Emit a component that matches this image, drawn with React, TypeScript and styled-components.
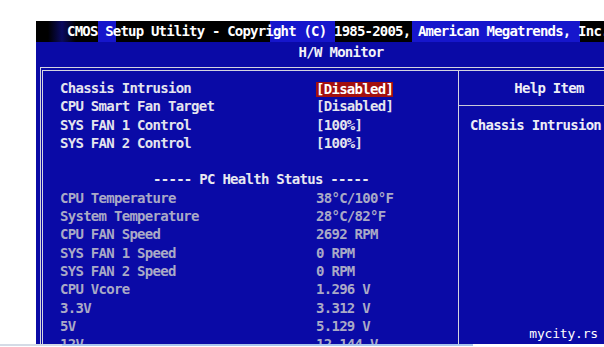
import React from "react";
import styled, { createGlobalStyle } from "styled-components";

const GlobalStyle = createGlobalStyle`
    html, body {
        margin: 0;
        padding: 0;
        background: #ffffff;
        overflow: hidden;
    }
`;

const Page = styled.div`
    position: relative;
    width: 604px;
    height: 347px;
    padding: 21px 0 0 36px;
    box-sizing: border-box;
    overflow: hidden;
`;

const Screen = styled.div`
    width: 610px;
    height: 323px;
    background: #0a0aa6;
    overflow: hidden;
    display: flex;
    flex-direction: column;
    font-family: "DejaVu Sans Mono", "Liberation Mono", monospace;
    font-weight: bold;
    font-size: 14px;
    letter-spacing: -0.72px;
    color: #e4e4ee;
`;

const TitleBar = styled.div`
    flex-shrink: 0;
    height: 21px;
    line-height: 21px;
    padding-left: 31px;
    white-space: nowrap;
    color: #ffffff;
    letter-spacing: -0.8px;
    background: linear-gradient(
        to right,
        #000 0,
        #000 12px,
        #0a0a60 26px,
        #000 40px,
        #000 62px,
        #1616cc 62px,
        #1616cc 80px,
        #000 80px,
        #000 234px,
        #1616cc 234px,
        #1616cc 299px,
        #000 299px,
        #000 376px,
        #1616cc 376px,
        #1616cc 544px,
        #000 544px
    );
`;

const SubTitle = styled.div`
    flex-shrink: 0;
    height: 25px;
    line-height: 21px;
    text-align: center;
    color: #f2f2f8;
`;

const Frame = styled.div`
    flex: 1;
    min-height: 0;
    display: flex;
    margin: 0 4px;
    border-top: 4px double #d4d4e0;
    border-left: 3px double #d4d4e0;
    border-right: 3px double #d4d4e0;
`;

const MainPanel = styled.div`
    width: 415px;
    padding: 8px 0 0 17px;
    box-sizing: border-box;
`;

const Row = styled.div<{ $dim?: boolean }>`
    display: grid;
    grid-template-columns: 256px auto;
    height: 18.3px;
    line-height: 18.3px;
    white-space: nowrap;
    color: ${(p) => (p.$dim ? "#a9a9c6" : "#e4e4ee")};
`;

const SectionHead = styled.div`
    height: 18.3px;
    line-height: 18.3px;
    padding-left: 93px;
    white-space: nowrap;
    color: #e8e8f0;
`;

const Spacer = styled.div`
    height: 18.3px;
`;

const Selected = styled.span`
    display: inline-block;
    background: #a31010;
    color: #ffffff;
    line-height: 15px;
    width: 77px;
    vertical-align: middle;
`;

const HelpPanel = styled.div`
    flex: 1;
    border-left: 1px solid #d4d4e0;
    display: flex;
    flex-direction: column;
`;

const HelpHead = styled.div`
    flex-shrink: 0;
    height: 34px;
    line-height: 34px;
    text-align: center;
    border-bottom: 1px solid #c8c8d8;
    color: #eeeef6;
`;

const HelpText = styled.div`
    padding: 10px 0 0 11px;
    line-height: 18.3px;
    white-space: nowrap;
    color: #eeeef6;
`;

const Watermark = styled.div`
    position: absolute;
    right: 6px;
    bottom: 6px;
    font-family: "DejaVu Sans Mono", monospace;
    font-size: 13px;
    letter-spacing: -0.2px;
    color: #ffffff;
`;

const BottomLine = styled.div`
    position: absolute;
    left: 0;
    bottom: 1px;
    width: 473px;
    height: 2px;
    background: linear-gradient(to right, #d4dbe6 0, #d4dbe6 62px, #a9c6ee 62px);
`;

const options = [
    { label: "Chassis Intrusion", value: "[Disabled]", selected: true },
    { label: "CPU Smart Fan Target", value: "[Disabled]" },
    { label: "SYS FAN 1 Control", value: "[100%]" },
    { label: "SYS FAN 2 Control", value: "[100%]" },
];

const health = [
    { label: "CPU Temperature", value: "38°C/100°F" },
    { label: "System Temperature", value: "28°C/82°F" },
    { label: "CPU FAN Speed", value: "2692 RPM" },
    { label: "SYS FAN 1 Speed", value: "0 RPM" },
    { label: "SYS FAN 2 Speed", value: "0 RPM" },
    { label: "CPU Vcore", value: "1.296 V" },
    { label: "3.3V", value: "3.312 V" },
    { label: "5V", value: "5.129 V" },
    { label: "12V", value: "12.144 V" },
];

export default function App() {
    return (
        <Page>
            <GlobalStyle />
            <Screen>
                <TitleBar>CMOS Setup Utility - Copyright (C) 1985-2005, American Megatrends, Inc.</TitleBar>
                <SubTitle>H/W Monitor</SubTitle>
                <Frame>
                    <MainPanel>
                        {options.map((o) => (
                            <Row key={o.label}>
                                <span>{o.label}</span>
                                <span>{o.selected ? <Selected>{o.value}</Selected> : o.value}</span>
                            </Row>
                        ))}
                        <Spacer />
                        <SectionHead>----- PC Health Status -----</SectionHead>
                        {health.map((h) => (
                            <Row key={h.label} $dim>
                                <span>{h.label}</span>
                                <span>{h.value}</span>
                            </Row>
                        ))}
                    </MainPanel>
                    <HelpPanel>
                        <HelpHead>Help Item</HelpHead>
                        <HelpText>Chassis Intrusion</HelpText>
                    </HelpPanel>
                </Frame>
            </Screen>
            <BottomLine />
            <Watermark>mycity.rs</Watermark>
        </Page>
    );
}
